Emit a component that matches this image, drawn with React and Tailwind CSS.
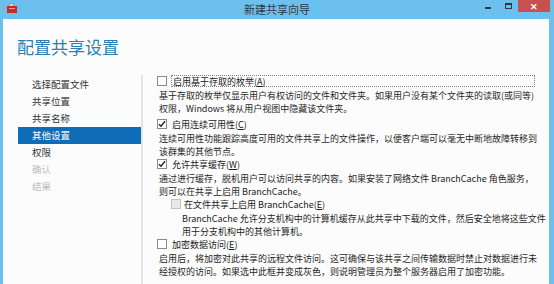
import React from "react";

const font = { fontFamily: '"Noto Sans CJK SC", "Noto Sans", sans-serif' };

const navItems = [
  { label: "选择配置文件" },
  { label: "共享位置" },
  { label: "共享名称" },
  { label: "其他设置", active: true },
  { label: "权限" },
  { label: "确认", disabled: true },
  { label: "结果", disabled: true },
];

const CheckBox = ({ checked, disabled }) => (
  <span
    className={`flex h-[10px] w-[10px] shrink-0 items-center justify-center border ${
      disabled ? "border-[#c4c4c4] bg-[#e8e8e8]" : "border-[#8a8a8a] bg-white"
    }`}
  >
    {checked && (
      <svg width="8" height="8" viewBox="0 0 8 8">
        <path d="M1 4.2 L3 6.3 L7 1.2" fill="none" stroke="#222" strokeWidth="1.4" />
      </svg>
    )}
  </span>
);

const Label = ({ text, hotkey }) => (
  <span className="whitespace-nowrap">
    {text}(<span className="underline">{hotkey}</span>)
  </span>
);

const Desc = ({ lines, className = "" }) => (
  <div className={`mt-[3px] text-[9px] leading-[12.5px] text-[#262626] ${className}`}>
    {lines.map((l) => (
      <div key={l} className="whitespace-nowrap">
        {l}
      </div>
    ))}
  </div>
);

const WindowIcon = () => (
  <svg width="12" height="12" viewBox="0 0 12 12">
    <path d="M3 1 H8 V4 H3 Z" fill="#9a9a9a" />
    <path d="M4 2 H7 V4 H4 Z" fill="#d8d8d8" />
    <path d="M1 4 H11 V11 H1 Z" fill="#c92a2a" />
    <path d="M3 6 H9 V7 H3 Z" fill="#f0a0a0" />
  </svg>
);

export default function App() {
  return (
    <div
      className="flex h-[284px] w-[554px] flex-col overflow-hidden bg-[#6cc0ee]"
      style={font}
    >
      {/* title bar */}
      <div className="grid h-[19px] shrink-0 grid-cols-[1fr_auto_1fr] items-start">
        <div className="pl-[6px] pt-[2px]">
          <WindowIcon />
        </div>
        <div className="pt-[2px] text-[11px] leading-[14px] text-[#2d3b45]">新建共享向导</div>
        <div className="flex items-start justify-end pr-[4px]">
          <div className="mt-[7px] mr-[14px] h-[2px] w-[6px] bg-[#2a3a44]" />
          <div className="mt-[3px] mr-[6px] h-[6px] w-[7px] border border-t-2 border-[#2a3a44]" />
          <div className="flex h-[12px] w-[32px] items-center justify-center bg-[#c75050] text-[9px] font-bold leading-none text-white">
            ✕
          </div>
        </div>
      </div>

      {/* window body */}
      <div className="ml-[3px] mr-[5px] flex min-h-0 flex-1 flex-col bg-[#fcfcfc]">
        <div className="h-[53px] shrink-0 pl-[14px] pt-[18px] text-[17px] leading-[20px] text-[#2b7fb4]">
          配置共享设置
        </div>

        <div className="flex min-h-0 flex-1">
          {/* nav */}
          <div className="w-[138px] shrink-0 pl-[15px] pt-[4px]">
            {navItems.map((item) => (
              <div
                key={item.label}
                className={`flex h-[17px] items-center pl-[14px] text-[9.5px] ${
                  item.active
                    ? "bg-[#0f6cb6] text-white"
                    : item.disabled
                    ? "text-[#bdbdbd]"
                    : "text-[#333]"
                }`}
              >
                {item.label}
              </div>
            ))}
          </div>
          <div className="mt-[3px] w-[2px] shrink-0 bg-[#e4e4e4]" />

          {/* options */}
          <div className="min-w-0 flex-1 pl-[14px] pr-[14px] pt-[3px] text-[9px] text-[#1a1a1a]">
            <div className="flex h-[12px] items-center">
              <CheckBox />
              <div className="ml-[4px] flex h-[12px] flex-1 items-center border border-dotted border-[#808080] pl-[1px] leading-none">
                <Label text="启用基于存取的枚举" hotkey="A" />
              </div>
            </div>
            <Desc
              className="ml-[2px]"
              lines={[
                "基于存取的枚举仅显示用户有权访问的文件和文件夹。如果用户没有某个文件夹的读取(或同等)",
                "权限，Windows 将从用户视图中隐藏该文件夹。",
              ]}
            />

            <div className="mt-[3px] flex h-[12px] items-center">
              <CheckBox checked />
              <span className="ml-[5px] leading-none">
                <Label text="启用连续可用性" hotkey="C" />
              </span>
            </div>
            <Desc
              className="ml-[2px]"
              lines={[
                "连续可用性功能跟踪高度可用的文件共享上的文件操作，以便客户端可以毫无中断地故障转移到",
                "该群集的其他节点。",
              ]}
            />

            <div className="flex h-[12px] items-center">
              <CheckBox checked />
              <span className="ml-[5px] leading-none">
                <Label text="允许共享缓存" hotkey="W" />
              </span>
            </div>
            <Desc
              className="ml-[2px]"
              lines={[
                "通过进行缓存，脱机用户可以访问共享的内容。如果安装了网络文件 BranchCache 角色服务，",
                "则可以在共享上启用 BranchCache。",
              ]}
            />

            <div className="flex h-[12px] items-center pl-[14px]">
              <CheckBox disabled />
              <span className="ml-[3px] leading-none">
                在文件共享上启用 BranchCache(<span className="underline">E</span>)
              </span>
            </div>
            <Desc
              className="ml-[25px]"
              lines={[
                "BranchCache 允许分支机构中的计算机缓存从此共享中下载的文件，然后安全地将这些文件",
                "用于分支机构中的其他计算机。",
              ]}
            />

            <div className="flex h-[12px] items-center">
              <CheckBox />
              <span className="ml-[5px] leading-none">
                <Label text="加密数据访问" hotkey="E" />
              </span>
            </div>
            <Desc
              className="ml-[2px]"
              lines={[
                "启用后，将加密对此共享的远程文件访问。这可确保与该共享之间传输数据时禁止对数据进行未",
                "经授权的访问。如果选中此框并变成灰色，则说明管理员为整个服务器启用了加密功能。",
              ]}
            />
          </div>
        </div>
      </div>
    </div>
  );
}
